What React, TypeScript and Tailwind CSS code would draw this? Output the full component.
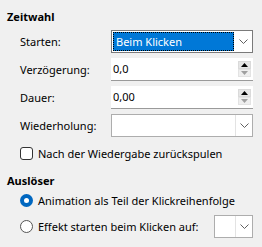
import React from 'react';

function Chevron() {
    return (
        <svg width="9" height="5" viewBox="0 0 9 5" fill="none">
            <path d="M0.5 0.5 L4.5 4.5 L8.5 0.5" stroke="#606060" strokeWidth="1" />
        </svg>
    );
}

function Combo({ value, selected, className = '' }: { value: string; selected?: boolean; className?: string }) {
    return (
        <div className={`flex h-[23px] bg-white border ${selected ? 'border-[#7a7a7a]' : 'border-[#adadad]'} ${className}`}>
            <div className="flex-1 p-[1px] min-w-0">
                {selected ? (
                    <div className="h-full bg-[#0078d7] text-white border border-dotted border-black pl-[2px] leading-[17px]">{value}</div>
                ) : (
                    <div className="h-full pl-[2px]">{value}</div>
                )}
            </div>
            <div className={`w-[17px] flex items-center justify-center ${selected ? '' : 'border-l border-[#e3e3e3]'}`}>
                <Chevron />
            </div>
        </div>
    );
}

function Spin({ value }: { value: string }) {
    return (
        <div className="flex h-[23px] border-b border-[#9a9a9a] flex-1">
            <div className="flex-1 bg-white pl-[2px] leading-[22px]">{value}</div>
            <div className="w-[17px] bg-white flex flex-col justify-center items-center">
                <div className="w-[13px] h-[8px] bg-[#e6e6e6] border border-[#dadada] flex items-center justify-center">
                    <svg width="7" height="4" viewBox="0 0 7 4"><path d="M0 4 L3.5 0 L7 4 Z" fill="#000" /></svg>
                </div>
                <div className="w-[13px] h-[8px] bg-[#efefef] border border-[#e3e3e3] flex items-center justify-center">
                    <svg width="7" height="4" viewBox="0 0 7 4"><path d="M0 0 L3.5 4 L7 0 Z" fill="#a0a0a0" /></svg>
                </div>
            </div>
        </div>
    );
}

export default function App() {
    return (
        <div className="w-[262px] h-[247px] bg-[#f0f0f0] pl-[7px] pt-[8px] font-['Noto_Sans',sans-serif] text-[11px] text-black leading-[18px] whitespace-nowrap">
            <div className="font-bold h-[18px]">Zeitwahl</div>
            <div className="pl-[13px] pr-[9px] mt-[4px] flex flex-col gap-[5px]">
                <div className="flex items-center h-[23px]">
                    <span className="w-[91px]">Starten:</span>
                    <Combo value="Beim Klicken" selected className="flex-1" />
                </div>
                <div className="flex items-center h-[23px]">
                    <span className="w-[91px]">Verzögerung:</span>
                    <Spin value="0,0" />
                </div>
                <div className="flex items-center h-[23px]">
                    <span className="w-[91px]">Dauer:</span>
                    <Spin value="0,00" />
                </div>
                <div className="flex items-center h-[23px]">
                    <span className="w-[91px]">Wiederholung:</span>
                    <Combo value="" className="flex-1" />
                </div>
                <label className="flex items-center h-[23px] gap-[5px]">
                    <span className="w-[13px] h-[13px] rounded-[3px] border border-[#333] bg-white" />
                    <span>Nach der Wiedergabe zurückspulen</span>
                </label>
            </div>
            <div className="font-bold h-[18px] mt-[7px]">Auslöser</div>
            <div className="pl-[13px] pr-[9px] flex flex-col">
                <div className="flex items-center h-[19px] gap-[5px] mt-[1px]">
                    <span className="w-[13px] h-[13px] rounded-full bg-[#0067c0] flex items-center justify-center">
                        <span className="w-[5px] h-[5px] rounded-full bg-white" />
                    </span>
                    <span>Animation als Teil der Klickreihenfolge</span>
                </div>
                <div className="flex items-center h-[21px] gap-[5px] mt-[6px]">
                    <span className="w-[13px] h-[13px] rounded-full border border-[#555] bg-white" />
                    <span className="flex-1">Effekt starten beim Klicken auf:</span>
                    <Combo value="" className="w-[39px] h-[21px]" />
                </div>
            </div>
        </div>
    );
}
